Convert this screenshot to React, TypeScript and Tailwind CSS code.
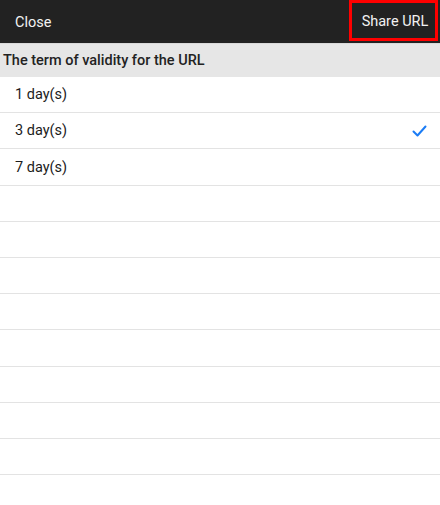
import { FC } from "react";

const options = [
	{ label: "1 day(s)", checked: false },
	{ label: "3 day(s)", checked: true },
	{ label: "7 day(s)", checked: false },
];

const emptyRows = Array.from({ length: 8 });

const App: FC = () => {
	return (
		<main className="flex h-[505px] w-[440px] flex-col overflow-hidden bg-white font-['Roboto',sans-serif] text-[14.5px] text-[#1c1c1c]">
			<header className="flex h-[43px] shrink-0 items-center justify-between bg-[#222222] text-[#f2f2f2]">
				<button className="pl-[15px] pt-[2px]">Close</button>
				<button className="mr-[2px] flex h-[41px] w-[89px] items-center justify-center self-start border-[3px] border-[#ff0000] pt-[3px] pl-[3px]">
					Share URL
				</button>
			</header>

			<div className="flex h-[34px] shrink-0 items-center border-t border-[#d9d9d9] bg-[#e6e6e6] pl-[3px] pt-[1px] font-medium text-[#222]">
				The term of validity for the URL
			</div>

			<ul>
				{options.map((o) => (
					<li key={o.label} className="flex h-[36.2px] items-center justify-between border-b border-[#e3e3e3] pl-[15px] pr-[13px] pt-[1px]">
						<span>{o.label}</span>
						{o.checked && (
							<svg width="15" height="12" viewBox="0 0 15 12" fill="none">
								<path d="M1.5 6.5 L5.5 10.5 L13.5 1.5" stroke="#1b7cf5" strokeWidth="2" strokeLinecap="round" strokeLinejoin="round" />
							</svg>
						)}
					</li>
				))}
				{emptyRows.map((_, i) => (
					<li key={i} className="h-[36.2px] border-b border-[#e3e3e3]" />
				))}
			</ul>
		</main>
	);
};

export default App;
